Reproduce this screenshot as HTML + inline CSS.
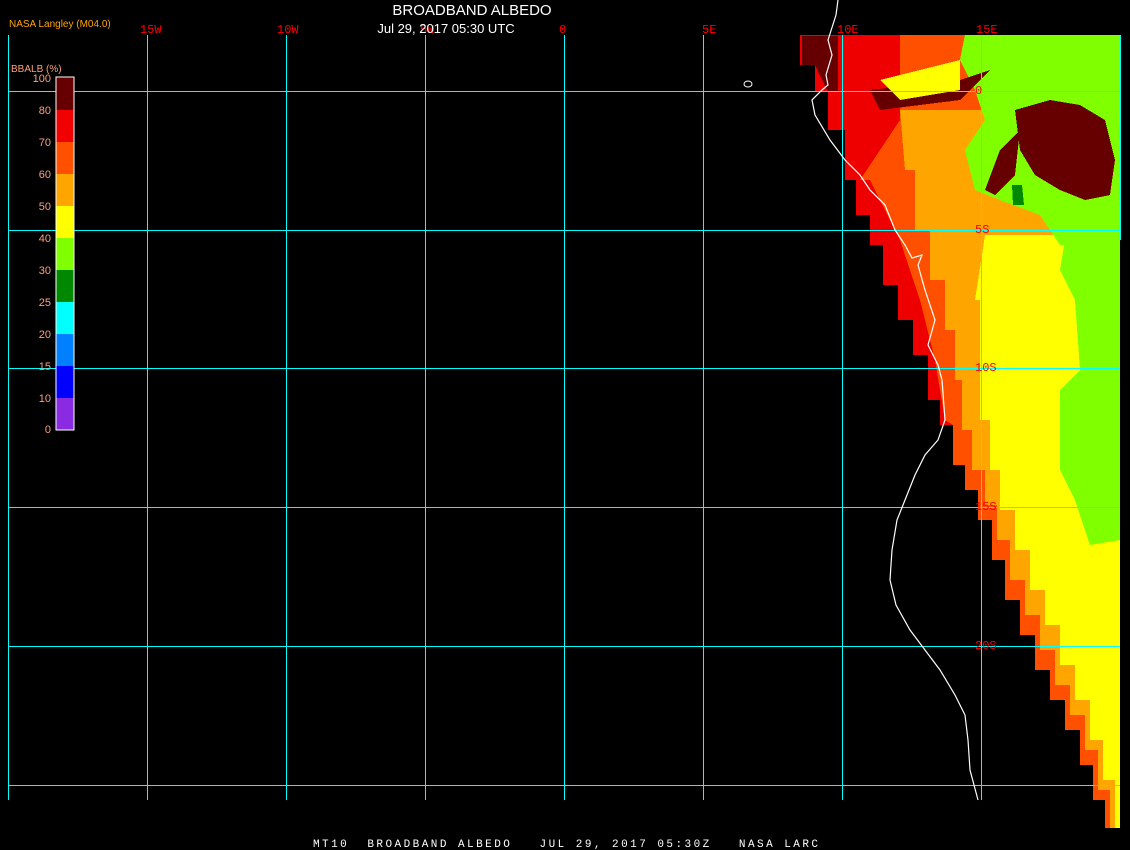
<!DOCTYPE html>
<html><head><meta charset="utf-8"><style>
html,body{margin:0;padding:0;background:#000;width:1130px;height:850px;overflow:hidden}
svg{display:block}
</style></head><body>
<svg width="1130" height="850" xmlns="http://www.w3.org/2000/svg" font-family="'Liberation Sans',sans-serif" shape-rendering="crispEdges">
<rect width="1130" height="850" fill="#000"/>
<polygon fill="#ff5000" points="800,35 1120,35 1120,828 1105,828 1105,800 1093,800 1093,765 1080,765 1080,730 1065,730 1065,700 1050,700 1050,670 1035,670 1035,635 1020,635 1020,600 1005,600 1005,560 992,560 992,520 978,520 978,490 965,490 965,465 953,465 953,425 940,425 940,400 928,400 928,355 913,355 913,320 898,320 898,285 883,285 883,245 870,245 870,215 856,215 856,180 845,180 845,130 828,130 828,92 815,92 815,65 800,65"/>
<polygon fill="#ffa500" points="900,110 1120,110 1120,828 1110,828 1110,790 1098,790 1098,750 1085,750 1085,715 1070,715 1070,685 1055,685 1055,650 1040,650 1040,615 1025,615 1025,580 1010,580 1010,540 997,540 997,505 985,505 985,470 972,470 972,430 962,430 962,380 955,380 955,330 945,330 945,280 930,280 930,230 915,230 915,170 905,170"/>
<polygon fill="#ffff00" points="985,235 1120,235 1120,828 1115,828 1115,780 1103,780 1103,740 1090,740 1090,700 1075,700 1075,665 1060,665 1060,625 1045,625 1045,590 1030,590 1030,550 1015,550 1015,510 1000,510 1000,470 990,470 990,420 980,420 980,300 975,300"/>
<polygon fill="#80ff00" points="965,35 1120,35 1120,245 1060,245 1040,215 1000,200 975,190 965,150 985,120 975,90 960,60"/>
<polygon fill="#80ff00" points="1065,240 1120,240 1120,540 1090,545 1075,500 1060,470 1060,390 1080,370 1075,300 1060,270"/>
<polygon fill="#660000" points="1015,110 1050,100 1080,105 1105,120 1115,160 1110,195 1085,200 1060,190 1035,175 1020,150"/>
<polygon fill="#660000" points="985,190 1000,150 1020,130 1015,175 995,195"/>
<polygon fill="#008800" points="1012,185 1022,185 1024,205 1013,205"/>
<polygon fill="#ee0000" points="800,35 900,35 900,120 880,150 860,180 845,180 845,130 828,130 828,92 815,92 815,65 800,65"/>
<polygon fill="#660000" points="802,36 838,36 838,92 828,92 815,65 802,65"/>
<polygon fill="#660000" points="870,90 960,80 990,70 960,100 880,110"/>
<polygon fill="#ffff00" points="880,80 960,60 960,90 900,100"/>
<polygon fill="#ee0000" points="845,180 870,180 900,240 920,300 935,360 945,420 953,425 940,425 940,400 928,400 928,355 913,355 913,320 898,320 898,285 883,285 883,245 870,245 870,215 856,215 856,180"/>
<g fill="#00ffff">
<rect x="8" y="35" width="1" height="765"/><rect x="147" y="35" width="1" height="765"/><rect x="286" y="35" width="1" height="765"/><rect x="425" y="35" width="1" height="765"/><rect x="564" y="35" width="1" height="765"/><rect x="703" y="35" width="1" height="765"/><rect x="842" y="35" width="1" height="765"/><rect x="981" y="35" width="1" height="765"/><rect x="1120" y="35" width="1" height="205"/>
<rect x="8" y="91" width="1112" height="1"/><rect x="8" y="230" width="1112" height="1"/><rect x="8" y="368" width="1112" height="1"/><rect x="8" y="507" width="1112" height="1"/><rect x="8" y="646" width="1112" height="1"/><rect x="8" y="785" width="1112" height="1"/>
</g>
<polyline fill="none" stroke="#fff" stroke-width="1.2" shape-rendering="auto" points="838,0 836,15 828,40 832,55 826,75 828,85 822,90 812,100 815,115 830,140 845,160 860,175 870,190 885,205 895,230 905,245 912,258 922,255 918,265 925,290 935,320 928,345 938,365 942,380 945,420 938,440 925,455 915,475 905,500 897,520 892,550 890,580 896,605 910,630 925,650 940,670 955,695 965,715 968,740 970,770 978,800"/>
<ellipse cx="748" cy="84" rx="4" ry="3" fill="none" stroke="#fff" stroke-width="1" shape-rendering="auto"/>
<g fill="#ff0000" font-family="'Liberation Mono',monospace" font-size="12">
<text x="140" y="33">15W</text><text x="277" y="33">10W</text><text x="420" y="33">5W</text><text x="559" y="33">0</text><text x="702" y="33">5E</text><text x="837" y="33">10E</text><text x="976" y="33">15E</text>
<text x="975" y="94">0</text><text x="975" y="233">5S</text><text x="975" y="371">10S</text><text x="975" y="510">15S</text><text x="975" y="649">20S</text>
</g>
<text x="472" y="15" fill="#fff" font-size="15" text-anchor="middle">BROADBAND ALBEDO</text>
<text x="446" y="33" fill="#fff" font-size="13" text-anchor="middle">Jul 29, 2017 05:30 UTC</text>
<text x="9" y="27" fill="#ffa500" font-size="10">NASA Langley (M04.0)</text>
<text x="11" y="72" fill="#ffa07a" font-size="10">BBALB (%)</text>
<rect x="56" y="77" width="18" height="33" fill="#660000"/>
<rect x="56" y="110" width="18" height="32" fill="#f00000"/>
<rect x="56" y="142" width="18" height="32" fill="#ff5000"/>
<rect x="56" y="174" width="18" height="32" fill="#ffa500"/>
<rect x="56" y="206" width="18" height="32" fill="#ffff00"/>
<rect x="56" y="238" width="18" height="32" fill="#80ff00"/>
<rect x="56" y="270" width="18" height="32" fill="#008800"/>
<rect x="56" y="302" width="18" height="32" fill="#00ffff"/>
<rect x="56" y="334" width="18" height="32" fill="#0080ff"/>
<rect x="56" y="366" width="18" height="32" fill="#0000ff"/>
<rect x="56" y="398" width="18" height="32" fill="#8a2be2"/>
<rect x="56" y="77" width="18" height="353" fill="none" stroke="#fff" stroke-width="1"/>
<g fill="#ffa07a" font-size="11" text-anchor="end">
<text x="51" y="82">100</text><text x="51" y="114">80</text><text x="51" y="146">70</text><text x="51" y="178">60</text><text x="51" y="210">50</text><text x="51" y="242">40</text><text x="51" y="274">30</text><text x="51" y="306">25</text><text x="51" y="338">20</text><text x="51" y="370">15</text><text x="51" y="402">10</text><text x="51" y="433">0</text>
</g>
<text x="313" y="847" fill="#fff" font-family="'Liberation Mono',monospace" font-size="11" xml:space="preserve" textLength="505" lengthAdjust="spacing">MT10  BROADBAND ALBEDO   JUL 29, 2017 05:30Z   NASA LARC</text>
</svg>
</body></html>
